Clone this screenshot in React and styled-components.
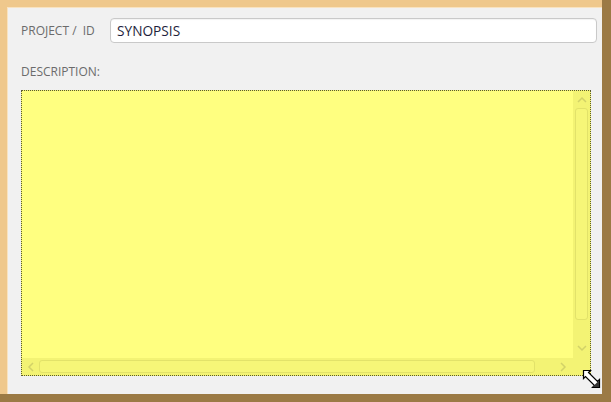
import React from "react";
import styled, { createGlobalStyle } from "styled-components";

const Global = createGlobalStyle`
  html, body { margin: 0; padding: 0; background: #9b7a45; }
  * { box-sizing: border-box; }
`;

const Frame = styled.div`
  width: 611px;
  height: 402px;
  background: #9b7a45;
  padding: 0 9px 8px 0;
  display: flex;
`;

const Bevel = styled.div`
  flex: 1;
  background: #efc88c;
  padding: 7px 0 0 7px;
  display: flex;
`;

const Panel = styled.div`
  flex: 1;
  background: #f1f1f1;
  box-shadow: inset 1px 1px 0 #f9e3c0;
  position: relative;
  display: flex;
  flex-direction: column;
  padding: 11px 5px 0 14px;
  font-family: "Open Sans", "Noto Sans", sans-serif;
`;

const Row = styled.div`
  display: flex;
  align-items: center;
  height: 25px;
`;

const Label = styled.span`
  font-size: 12px;
  color: #6b6b6b;
  white-space: pre;
  width: 89px;
`;

const Input = styled.div`
  flex: 1;
  height: 25px;
  border: 1px solid #c9c9c9;
  border-radius: 4px;
  background: #fff;
  box-shadow: inset 0 1px 1px rgba(0,0,0,0.05);
  display: flex;
  align-items: center;
  padding-left: 6px;
  font-size: 13.7px;
  color: #1e1e3c;
`;

const DescLabel = styled(Label)`
  margin-top: 21px;
  height: 16px;
  line-height: 16px;
`;

const TextBox = styled.div`
  margin-top: 10px;
  width: 570px;
  height: 286px;
  border: 1px dotted #5a5a30;
  background: #f3f374;
  display: grid;
  grid-template-columns: 1fr 17px;
  grid-template-rows: 1fr 17px;
`;

const Area = styled.div`
  background: #ffff80;
`;

const VScroll = styled.div`
  display: flex;
  flex-direction: column;
  align-items: center;
  padding: 3px 1px 4px 1px;
  gap: 2px;
`;

const HScroll = styled.div`
  display: flex;
  align-items: center;
  padding: 1px 4px 1px 3px;
  gap: 2px;
`;

const Thumb = styled.div`
  flex: 1;
  align-self: stretch;
  border: 1px solid #e2e26a;
  border-radius: 3px;
  background: #f6f678;
  margin: ${(p) => (p.$v ? "0 1px" : "1px 0")};
`;

const ArrowBox = styled.div`
  width: ${(p) => (p.$v ? "15px" : "12px")};
  height: ${(p) => (p.$v ? "12px" : "15px")};
  display: flex;
  align-items: center;
  justify-content: center;
`;

const Grip = styled.div`
  position: absolute;
  right: 1px;
  bottom: 5px;
  width: 19px;
  height: 20px;
`;

const Chevron = ({ dir }) => {
  const d = {
    up: "M2 6 L6 2 L10 6",
    down: "M2 2 L6 6 L10 2",
    left: "M6 2 L2 6 L6 10",
    right: "M2 2 L6 6 L2 10",
  }[dir];
  const v = dir === "up" || dir === "down";
  return (
    <svg width={v ? 12 : 8} height={v ? 8 : 12} viewBox={v ? "0 0 12 8" : "0 0 8 12"}>
      <path d={d} fill="none" stroke="#d2d268" strokeWidth="1.5" />
    </svg>
  );
};

export default function App() {
  return (
    <>
      <Global />
      <Frame>
        <Bevel>
          <Panel>
            <Row>
              <Label>PROJECT /  ID</Label>
              <Input>SYNOPSIS</Input>
            </Row>
            <DescLabel>DESCRIPTION:</DescLabel>
            <TextBox>
              <Area />
              <VScroll>
                <ArrowBox $v>
                  <Chevron dir="up" />
                </ArrowBox>
                <Thumb $v />
                <ArrowBox $v style={{ marginTop: 20 }}>
                  <Chevron dir="down" />
                </ArrowBox>
              </VScroll>
              <HScroll>
                <ArrowBox>
                  <Chevron dir="left" />
                </ArrowBox>
                <Thumb />
                <ArrowBox style={{ marginLeft: 20 }}>
                  <Chevron dir="right" />
                </ArrowBox>
              </HScroll>
              <div />
            </TextBox>
            <Grip>
              <svg width="19" height="20" viewBox="0 0 19 20">
                <path
                  d="M1.5 1.5 L8.5 1.5 L6.5 3.5 L15.5 12.5 L17.5 10.5 L17.5 18.5 L10.5 18.5 L12.5 16.5 L3.5 7.5 L1.5 9.5 Z"
                  fill="#fff"
                  stroke="#000"
                  strokeWidth="1.2"
                />
                <path d="M17 11.5 L17 18 L10.5 18 Z" fill="#333" />
              </svg>
            </Grip>
          </Panel>
        </Bevel>
      </Frame>
    </>
  );
}
